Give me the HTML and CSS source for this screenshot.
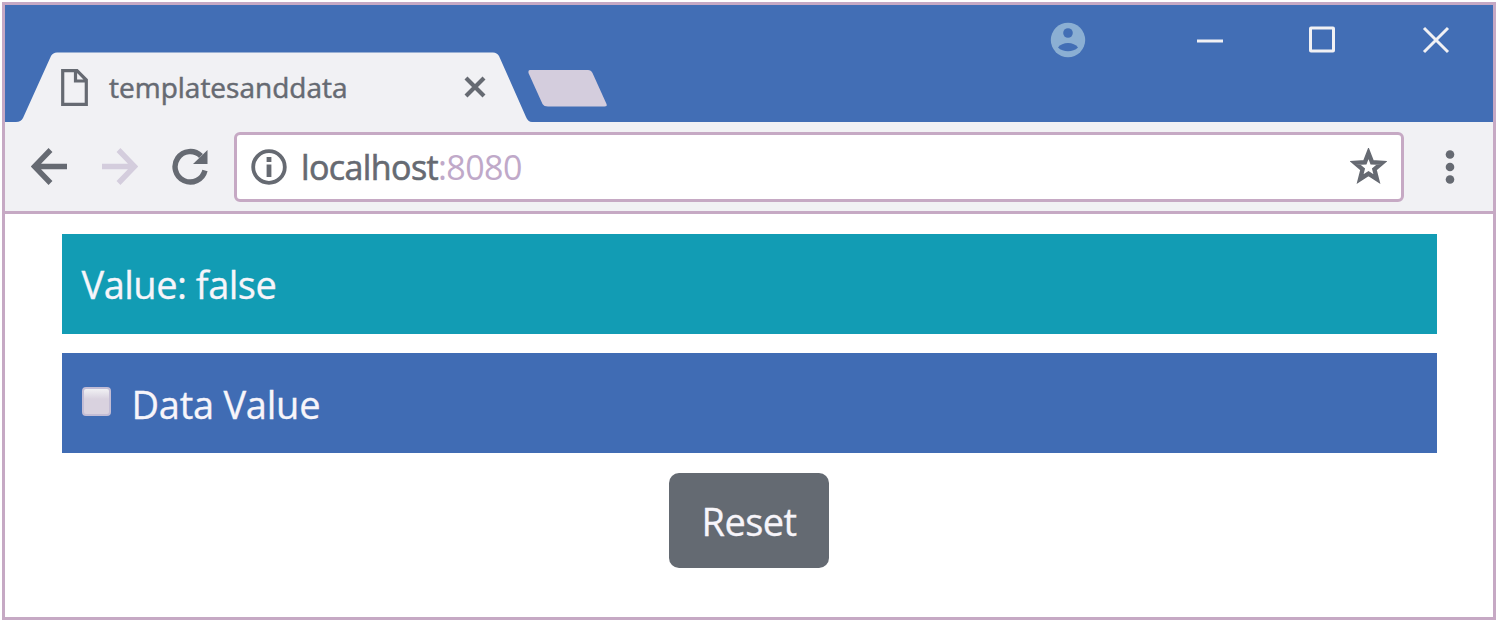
FILE: index.html
```html
<!DOCTYPE html>
<html lang="en">
<head>
<meta charset="utf-8">
<title>templatesanddata</title>
<link rel="stylesheet" href="styles.css">
</head>
<body>
<div class="window">
  <header class="titlebar">
    <div class="tab">
      <svg class="tab-shape" width="512" height="70" viewBox="0 0 512 70"><path d="M-4 70Q1 70 3 66L31 4Q33 .5 37 .5H473Q477 .5 479 4L506 65Q508 70 512 70Z"/></svg>
      <svg class="doc-icon" width="27" height="37" viewBox="0 0 27 37"><path d="M1.700 1.700H16L25.300 11V35.300H1.700ZM14.500 2V12H25"/></svg>
      <span class="tab-title">templatesanddata</span>
      <svg class="tab-close" width="22" height="22" viewBox="0 0 22 22"><path d="M2 2L20 20M20 2L2 20"/></svg>
    </div>
    <svg class="new-tab" width="80" height="37" viewBox="0 0 80 37"><path d="M2 0H60Q63 0 64.500 3L78.500 34Q79.500 36.500 76.500 36.500H20Q16 36.500 14.500 34L.5 3Q0 0 2 0Z"/></svg>
    <div class="controls">
      <svg class="avatar" width="36" height="36" viewBox="0 0 36 36"><circle class="face" cx="18" cy="18" r="17.200"/><circle class="cut" cx="18" cy="11" r="4.800"/><path class="cut" d="M8 25.500C12 19.500 24 19.500 28 25.500C23 30.500 13 30.500 8 25.500Z"/></svg>
      <svg class="control minimize" width="28" height="28" viewBox="0 0 28 28"><path d="M1 15H27"/></svg>
      <svg class="control maximize" width="28" height="28" viewBox="0 0 28 28"><rect x="1.500" y="2" width="23" height="23" rx=".5"/></svg>
      <svg class="control" width="28" height="28" viewBox="0 0 28 28"><path d="M2 2L26 26M26 2L2 26"/></svg>
    </div>
  </header>
  <nav class="toolbar">
    <svg class="nav-icon" width="37" height="37" viewBox="0 0 37 37"><path d="M36 18.500H4M19.500 2L3.500 18.500L19.500 35"/></svg>
    <svg class="nav-icon disabled" width="37" height="37" viewBox="0 0 37 37"><path d="M1 18.500H33M17.500 2L33.500 18.500L17.500 35"/></svg>
    <svg class="nav-icon" width="37" height="37" viewBox="0 0 37 37"><path d="M34 22.500A15.200 15.200 0 1 1 30 8"/><path class="solid" d="M36.500 2V16H22Z"/></svg>
    <div class="address">
      <svg class="info" width="36" height="36" viewBox="0 0 36 36"><circle cx="18" cy="18" r="15.800"/><path class="info-mark" d="M18 15.500V28M18 8V13"/></svg>
      <span class="url">localhost<span class="port">:8080</span></span>
      <svg class="star" width="37" height="37" viewBox="0 0 37 37"><path d="M18.500 5L22.100 14.300L32 14.900L24.400 21.300L26.900 31L18.500 25.600L10.100 31L12.600 21.300L5 14.900L14.900 14.300Z"/></svg>
    </div>
    <svg class="menu" width="10" height="36" viewBox="0 0 10 36"><circle cx="5" cy="5.500" r="4.300"/><circle cx="5" cy="18" r="4.300"/><circle cx="5" cy="30.500" r="4.300"/></svg>
  </nav>
  <main class="page">
    <div class="panel info-panel"><span class="value-text">Value: false</span></div>
    <label class="panel check-panel"><input class="checkbox" type="checkbox"><span class="check-text">Data Value</span></label>
    <button class="reset"><span class="reset-text">Reset</span></button>
  </main>
</div>
</body>
</html>
```

FILE: styles.css
```css
* { box-sizing: border-box; }
body {
  margin: 0;
  padding: 2px;
  background: #fff;
  font-family: "Open Sans", "Noto Sans", sans-serif;
}
svg { display: block; flex: none; }
span { white-space: nowrap; }
.window {
  width: 1494px;
  height: 618px;
  border: 3px solid #c6a9c4;
  background: #fff;
}
.titlebar {
  display: flex;
  height: 117px;
  background: #426eb5;
}
.tab {
  display: flex;
  align-items: center;
  position: relative;
  width: 512px;
  height: 70px;
  margin: 47px 0 0 15px;
  padding-left: 41px;
}
.tab-shape { position: absolute; left: 0; top: 0; overflow: visible; fill: #f1f1f4; }
.doc-icon { position: relative; fill: none; stroke: #666a72; stroke-width: 3.2; }
.tab-title {
  position: relative;
  width: 238px;
  margin-left: 21px;
  color: #666a72;
  font-size: 28px;
  font-weight: 500;
  line-height: 68px;
  padding-bottom: 1px;
  -webkit-text-stroke: .5px #666a72;
}
.tab-close { position: relative; margin-left: 117px; fill: none; stroke: #666a72; stroke-width: 4.2; }
.new-tab { margin: 65px 0 0 -4px; fill: #d4cddd; }
.controls { display: flex; margin-left: auto; padding: 17px 43px 0 0; }
.avatar { margin-right: 110px; }
.face { fill: #8bafd3; }
.cut { fill: #426eb5; }
.control { margin: 4px 0 0 85px; fill: none; stroke: #f1f1f4; stroke-width: 3; }
.minimize { margin-left: 0; }
.toolbar {
  display: flex;
  align-items: center;
  height: 92px;
  padding: 0 38px 3px 26px;
  border-bottom: 3px solid #c6a9c4;
  background: #f1f1f4;
}
.nav-icon { margin: 3px 33px 0 0; fill: none; stroke: #666a72; stroke-width: 5.4; }
.nav-icon.disabled { stroke: #d4cddd; }
.nav-icon .solid { fill: #666a72; stroke: none; }
.address {
  display: flex;
  align-items: center;
  width: 1170px;
  height: 70px;
  margin: 3px 0 0 -7px;
  padding: 0 14px;
  border: 3px solid #c6a9c4;
  border-radius: 6px;
  background: #fff;
}
.info { fill: none; stroke: #666a72; stroke-width: 3.8; }
.info-mark { stroke-width: 4.8; }
.url {
  margin-left: 14px;
  color: #666a72;
  font-size: 34px;
  letter-spacing: -.6px;
  line-height: 60px;
  -webkit-text-stroke: .6px #666a72;
}
.port { color: #c0a9c9; -webkit-text-stroke: 0; }
.star { margin-left: auto; fill: none; stroke: #666a72; stroke-width: 4.4; }
.menu { margin: 4px 0 0 auto; fill: #666a72; }
.page { display: flex; flex-direction: column; align-items: center; padding-top: 20px; }
.panel {
  display: flex;
  align-items: center;
  width: 1375px;
  height: 100px;
  margin-bottom: 19px;
  padding: 0 20px;
  color: #f7f5fa;
  font-size: 38px;
  -webkit-text-stroke: .3px #f7f5fa;
}
.value-text { letter-spacing: -.5px; }
.check-text { letter-spacing: -.25px; padding-top: 1px; }
.info-panel { background: #129cb4; }
.check-panel { background: #406cb4; margin-bottom: 20px; }
.checkbox {
  appearance: none;
  width: 29px;
  height: 29px;
  margin: 0 21px 4px 0;
  border: 2px solid #c3bdd5;
  border-radius: 4px;
  background: linear-gradient(#f1f1f4, #d9d2df 40%);
}
.reset {
  width: 160px;
  height: 95px;
  padding: 0;
  border: 0;
  border-radius: 10px;
  background: #646a72;
  color: #f7f5fa;
  font: 38px "Open Sans", "Noto Sans", sans-serif;
  letter-spacing: -.6px;
  -webkit-text-stroke: .3px #f7f5fa;
}
```
